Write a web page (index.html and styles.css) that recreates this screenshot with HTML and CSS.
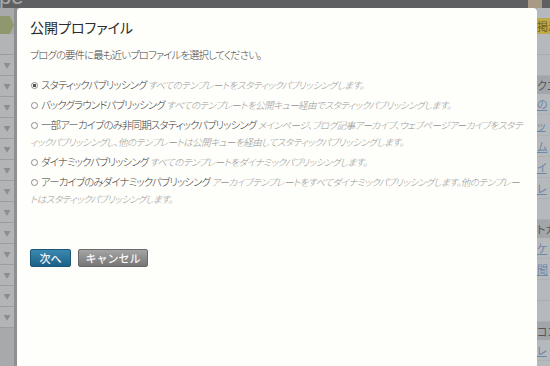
FILE: index.html
```html
<!DOCTYPE html>
<html lang="ja">
<head>
    <meta charset="UTF-8">
    <meta name="viewport" content="width=device-width, initial-scale=1.0">
    <title>公開プロファイル</title>
    <link rel="stylesheet" href="styles.css">
</head>
<body>
    <div class="topbar">
        <span class="logo">pe</span>
        <span class="avatar"></span>
    </div>

    <div class="main">
        <div class="rail-left">
            <div class="tab"></div>
            <div class="tile"></div>
            <div class="tile">▼</div>
            <div class="tile">▼</div>
            <div class="tile">▼</div>
            <div class="tile">▼</div>
            <div class="tile">▼</div>
            <div class="tile">▼</div>
            <div class="tile">▼</div>
            <div class="tile">▼</div>
            <div class="tile">▼</div>
            <div class="tile">▼</div>
            <div class="tile">▼</div>
            <div class="tile">▼</div>
            <div class="tile">▼</div>
        </div>

        <div class="dialog">
            <h2 class="title">公開プロファイル</h2>
            <p class="intro">ブログの要件に最も近いプロファイルを選択してください。</p>

            <div class="options">
                <label class="option"><input type="radio" name="profile" checked>スタティックパブリッシング <em>すべてのテンプレートをスタティックパブリッシングします。</em></label>
                <label class="option"><input type="radio" name="profile">バックグラウンドパブリッシング <em>すべてのテンプレートを公開キュー経由でスタティックパブリッシングします。</em></label>
                <label class="option"><input type="radio" name="profile">一部アーカイブのみ非同期スタティックパブリッシング <em>メインページ、ブログ記事アーカイブ、ウェブページアーカイブをスタティックパブリッシングし、他のテンプレートは公開キューを経由してスタティックパブリッシングします。</em></label>
                <label class="option"><input type="radio" name="profile">ダイナミックパブリッシング <em>すべてのテンプレートをダイナミックパブリッシングします。</em></label>
                <label class="option"><input type="radio" name="profile">アーカイブのみダイナミックパブリッシング <em>アーカイブテンプレートをすべてダイナミックパブリッシングします。他のテンプレートはスタティックパブリッシングします。</em></label>
            </div>

            <div class="actions">
                <button class="btn btn-primary">次へ</button>
                <button class="btn btn-cancel">キャンセル</button>
            </div>
        </div>

        <div class="rail-right">
            <div class="r-yellow">掲示</div>
            <div class="r-row"></div>
            <div class="r-row"></div>
            <div class="r-head">クエ</div>
            <div class="r-link">の</div>
            <div class="r-link">ッ</div>
            <div class="r-link">ム</div>
            <div class="r-link">イ</div>
            <div class="r-link">レ</div>
            <div class="r-row"></div>
            <div class="r-head">トカ</div>
            <div class="r-link">ケ</div>
            <div class="r-link">聞</div>
            <div class="r-row"></div>
            <div class="r-row"></div>
            <div class="r-head">コン</div>
            <div class="r-link">レ</div>
            <div class="r-link">開</div>
        </div>
    </div>
</body>
</html>
```

FILE: styles.css
```css
body {
    margin: 0;
    padding: 0;
    width: 550px;
    height: 366px;
    overflow: hidden;
    background: #a9abad;
    font-family: "Noto Sans CJK JP", "Liberation Sans", sans-serif;
    font-feature-settings: "palt";
}
.topbar {
    height: 8px;
    background: #5f6061;
    overflow: hidden;
    display: flex;
    justify-content: space-between;
}
.logo {
    font-family: "Liberation Sans", sans-serif;
    font-size: 22px;
    line-height: 22px;
    color: #a8a8a8;
    margin-top: -14px;
    margin-left: -1px;
}
.avatar {
    width: 14px;
    height: 8px;
    margin-right: 8px;
    background: #a99a86;
}
.main {
    display: flex;
    height: 358px;
}
.rail-left {
    width: 14px;
    border-right: 3px solid #8e8f90;
    background: #a8a9aa;
    display: flex;
    flex-direction: column;
    overflow: hidden;
}
.tab {
    height: 18px;
    margin-top: 8px;
    background: #8f976f;
    clip-path: polygon(0 0, 70% 0, 100% 50%, 70% 100%, 0 100%);
}
.tile {
    height: 20px;
    flex: none;
    border-bottom: 1px solid #9c9d9e;
    background: #b3b4b5;
    color: #8c8d8e;
    font-size: 7px;
    line-height: 20px;
    text-align: center;
}
.dialog {
    width: 494px;
    padding: 0 13px;
    background: #fefefa;
    border-radius: 4px 4px 0 0;
}
.title {
    margin: 9px 0 0;
    font-size: 14px;
    font-weight: normal;
    line-height: 20px;
    color: #2b2b2b;
}
.intro {
    margin: 10px 0 0;
    font-size: 10.5px;
    font-weight: 300;
    letter-spacing: -1px;
    line-height: 16px;
    color: #444;
}
.options {
    margin-top: 13px;
}
.option {
    display: block;
    font-size: 10.5px;
    font-weight: 300;
    letter-spacing: -0.9px;
    line-height: 17px;
    margin-bottom: 3px;
    color: #3a3a3a;
}
.option em {
    font-size: 9.5px;
    line-height: 12px;
    letter-spacing: -0.5px;
    color: #949494;
}
.option input {
    appearance: none;
    -webkit-appearance: none;
    width: 7px;
    height: 7px;
    margin: 0 3px 0 1px;
    border: 1px solid #8a8a8a;
    border-radius: 50%;
    vertical-align: 0;
    background: #fff;
}
.option input:checked {
    background: radial-gradient(circle, #555 0 1.6px, #fff 2px);
}
.actions {
    margin-top: 42px;
    display: flex;
    gap: 7px;
}
.btn {
    box-sizing: border-box;
    height: 18px;
    padding: 0;
    border: 1px solid #555;
    border-radius: 2px;
    font-family: inherit;
    font-size: 11px;
    line-height: 16px;
    text-align: center;
    color: #fff;
    text-shadow: 0 0 1px rgba(255, 255, 255, 0.4);
    cursor: pointer;
}
.btn-primary {
    width: 41px;
    background: linear-gradient(#3a89b0, #1c6186);
    border-color: #1b5676;
}
.btn-cancel {
    width: 70px;
    background: linear-gradient(#a4a4a4, #767676);
    border-color: #6a6a6a;
}
.rail-right {
    width: 13px;
    background: #b6b9bc;
    display: flex;
    flex-direction: column;
    overflow: hidden;
    white-space: nowrap;
    font-size: 11px;
}
.r-yellow {
    height: 16px;
    margin-top: 10px;
    background: #bfa94a;
    color: #6e5d1c;
    line-height: 16px;
}
.r-row {
    height: 20px;
    flex: none;
    border-bottom: 1px solid #a9acaf;
}
.r-head {
    height: 18px;
    flex: none;
    background: #a3a6a9;
    color: #555;
    line-height: 18px;
}
.r-link {
    height: 20px;
    flex: none;
    color: #6d87a8;
    text-decoration: underline;
    line-height: 20px;
    border-bottom: 1px solid #aeb1b4;
}
```
